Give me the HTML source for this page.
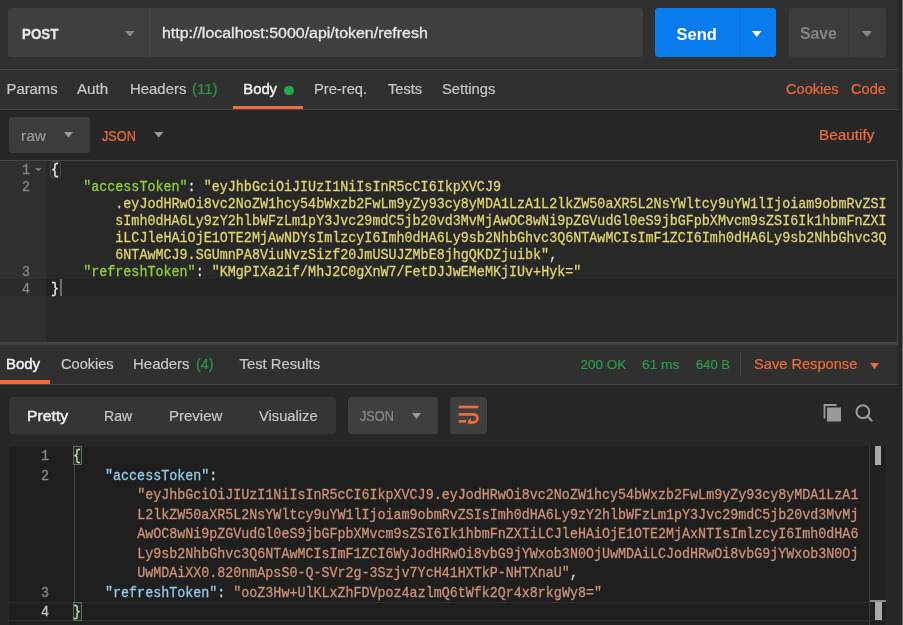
<!DOCTYPE html>
<html><head><meta charset="utf-8"><style>
html,body{margin:0;padding:0;}
body{width:903px;height:625px;overflow:hidden;position:relative;background:#272727;font-family:"Liberation Sans",sans-serif;}
#w{position:absolute;left:0;top:0;width:903px;height:625px;filter:blur(0.45px);}
.a{position:absolute;}
.t{position:absolute;white-space:pre;line-height:1;transform-origin:0 0;}
.c{position:absolute;white-space:pre;font-family:"Liberation Mono",monospace;font-size:14.2px;line-height:17px;-webkit-text-stroke:0.3px currentColor;transform:scaleX(0.9413);transform-origin:0 0;}
.c span{-webkit-text-stroke:0.3px currentColor;}
.r{line-height:19.5px;}
.q{transform:scaleX(0.9437);}
</style></head><body><div id="w">
<div class="a" style="left:0px;top:0px;width:903px;height:625px;background:#272727;"></div>
<div class="a" style="left:0px;top:0px;width:898px;height:109px;background:#303030;"></div>
<div class="a" style="left:901.7px;top:0px;width:1.3px;height:625px;background:#6a6a6a;"></div>
<div class="a" style="left:8px;top:8px;width:635px;height:49px;background:#3f3f3f;border-radius:3px;"></div>
<div class="a" style="left:148.5px;top:8px;width:1px;height:49px;background:#464646;"></div>
<div class="t" style="left:22.30px;top:26.06px;font-size:15.4px;color:#e8e8e8;font-weight:700;transform:scaleX(0.8674);-webkit-text-stroke:0.3px #e8e8e8;">POST</div>
<svg class="a" style="left:125.4px;top:30.5px" width="9.6" height="5.8" viewBox="0 0 9.6 5.8"><path d="M0 0H9.6L4.80 5.8Z" fill="#8a8a8a"/></svg>
<div class="t" style="left:161.60px;top:24.68px;font-size:15.5px;color:#e8e8e8;font-weight:400;transform:scaleX(1.0281);-webkit-text-stroke:0.3px #e8e8e8;">http://localhost:5000/api/token/refresh</div>
<div class="a" style="left:655px;top:8px;width:121px;height:49px;background:#097bed;border-radius:3px;"></div>
<div class="a" style="left:739px;top:8px;width:1px;height:49px;background:#0a6ed4;"></div>
<div class="t" style="left:676.60px;top:25.83px;font-size:16.5px;color:#ffffff;font-weight:700;">Send</div>
<svg class="a" style="left:752.3px;top:30.5px" width="9.5" height="6.0" viewBox="0 0 9.5 6.0"><path d="M0 0H9.5L4.75 6.0Z" fill="#ffffff"/></svg>
<div class="a" style="left:789px;top:8px;width:97px;height:49px;background:#3c3c3c;border-radius:3px;"></div>
<div class="a" style="left:848px;top:8px;width:1px;height:49px;background:#343434;"></div>
<div class="t" style="left:799.80px;top:26.26px;font-size:16px;color:#858585;font-weight:700;transform:scaleX(0.9877);">Save</div>
<svg class="a" style="left:861.7px;top:30.5px" width="10.1" height="6.0" viewBox="0 0 10.1 6.0"><path d="M0 0H10.1L5.05 6.0Z" fill="#8a8a8a"/></svg>
<div class="a" style="left:0px;top:69px;width:898px;height:1.2px;background:#474747;"></div>
<div class="a" style="left:0px;top:109px;width:898px;height:1.2px;background:#474747;"></div>
<div class="t" style="left:6.60px;top:82.47px;font-size:14.8px;color:#c8c8c8;font-weight:400;-webkit-text-stroke:0.2px #c8c8c8;">Params</div>
<div class="t" style="left:77.40px;top:82.47px;font-size:14.8px;color:#c8c8c8;font-weight:400;transform:scaleX(1.0258);-webkit-text-stroke:0.2px #c8c8c8;">Auth</div>
<div class="t" style="left:129.60px;top:82.47px;font-size:14.8px;color:#c8c8c8;font-weight:400;transform:scaleX(1.0082);-webkit-text-stroke:0.2px #c8c8c8;">Headers</div>
<div class="t" style="left:192.00px;top:82.47px;font-size:14.8px;color:#24994a;font-weight:400;transform:scaleX(1.0145);-webkit-text-stroke:0.2px #24994a;">(11)</div>
<div class="t" style="left:243.30px;top:82.47px;font-size:14.8px;color:#f2f2f2;font-weight:400;-webkit-text-stroke:0.45px #f2f2f2;">Body</div>
<div class="a" style="left:284px;top:85.5px;width:9.5px;height:9.5px;border-radius:50%;background:#26a74b"></div>
<div class="t" style="left:313.70px;top:82.47px;font-size:14.8px;color:#c8c8c8;font-weight:400;transform:scaleX(0.9925);-webkit-text-stroke:0.2px #c8c8c8;">Pre-req.</div>
<div class="t" style="left:387.80px;top:82.47px;font-size:14.8px;color:#c8c8c8;font-weight:400;transform:scaleX(0.9896);-webkit-text-stroke:0.2px #c8c8c8;">Tests</div>
<div class="t" style="left:442.00px;top:82.47px;font-size:14.8px;color:#c8c8c8;font-weight:400;-webkit-text-stroke:0.2px #c8c8c8;">Settings</div>
<div class="t" style="left:785.70px;top:82.47px;font-size:14.8px;color:#f26b3a;font-weight:400;transform:scaleX(0.9850);-webkit-text-stroke:0.2px #f26b3a;">Cookies</div>
<div class="t" style="left:851.00px;top:82.47px;font-size:14.8px;color:#f26b3a;font-weight:400;transform:scaleX(0.9867);-webkit-text-stroke:0.2px #f26b3a;">Code</div>
<div class="a" style="left:233px;top:106px;width:70px;height:3px;background:#f26b3a;"></div>
<div class="a" style="left:9px;top:117px;width:81px;height:36px;background:#3c3c3c;border-radius:3px;"></div>
<div class="t" style="left:20.90px;top:128.77px;font-size:14.8px;color:#9a9a9a;font-weight:400;transform:scaleX(1.0418);-webkit-text-stroke:0.2px #9a9a9a;">raw</div>
<svg class="a" style="left:63.8px;top:132.3px" width="9.0" height="5.6" viewBox="0 0 9.0 5.6"><path d="M0 0H9.0L4.50 5.6Z" fill="#9a9a9a"/></svg>
<div class="t" style="left:101.70px;top:129.27px;font-size:14.8px;color:#f26b3a;font-weight:400;transform:scaleX(0.8570);-webkit-text-stroke:0.2px #f26b3a;">JSON</div>
<svg class="a" style="left:153.5px;top:132.3px" width="9.5" height="5.6" viewBox="0 0 9.5 5.6"><path d="M0 0H9.5L4.75 5.6Z" fill="#9a9a9a"/></svg>
<div class="t" style="left:818.60px;top:127.97px;font-size:14.8px;color:#f26b3a;font-weight:400;transform:scaleX(1.0355);-webkit-text-stroke:0.2px #f26b3a;">Beautify</div>
<div class="a" style="left:0px;top:159.8px;width:898px;height:185.2px;background:#474747;border-top-right-radius:3px;"></div>
<div class="a" style="left:0px;top:160.8px;width:46px;height:181.2px;background:#2f2f2f;"></div>
<div class="a" style="left:46px;top:160.8px;width:851px;height:181.2px;background:#282828;border-top-right-radius:2px;"></div>
<div class="a" style="left:0px;top:279px;width:46px;height:17px;background:#2a2a2a;"></div>
<div class="a" style="left:46px;top:279px;width:851px;height:17px;background:#222222;"></div>
<div class="a" style="left:0px;top:342px;width:898px;height:3px;background:#434343;"></div>
<div class="a" style="left:0px;top:345px;width:898px;height:40px;background:#303030;"></div>
<div class="a" style="left:0px;top:384px;width:898px;height:1.2px;background:#484848;"></div>
<div class="a" style="left:0px;top:380px;width:50px;height:4px;background:#f26b3a;"></div>
<div class="t" style="left:6.40px;top:357.07px;font-size:14.8px;color:#f2f2f2;font-weight:400;transform:scaleX(1.0106);-webkit-text-stroke:0.45px #f2f2f2;">Body</div>
<div class="t" style="left:60.50px;top:357.07px;font-size:14.8px;color:#c8c8c8;font-weight:400;transform:scaleX(0.9850);-webkit-text-stroke:0.2px #c8c8c8;">Cookies</div>
<div class="t" style="left:133.20px;top:357.07px;font-size:14.8px;color:#c8c8c8;font-weight:400;transform:scaleX(1.0117);-webkit-text-stroke:0.2px #c8c8c8;">Headers</div>
<div class="t" style="left:196.20px;top:357.07px;font-size:14.8px;color:#24994a;font-weight:400;transform:scaleX(0.9747);-webkit-text-stroke:0.2px #24994a;">(4)</div>
<div class="t" style="left:239.50px;top:357.07px;font-size:14.8px;color:#c8c8c8;font-weight:400;-webkit-text-stroke:0.2px #c8c8c8;">Test Results</div>
<div class="t" style="left:580.40px;top:357.87px;font-size:13.5px;color:#2a9d4a;font-weight:400;-webkit-text-stroke:0.2px #2a9d4a;">200 OK</div>
<div class="t" style="left:641.80px;top:357.87px;font-size:13.5px;color:#2a9d4a;font-weight:400;transform:scaleX(1.0166);-webkit-text-stroke:0.2px #2a9d4a;">61 ms</div>
<div class="t" style="left:695.60px;top:357.87px;font-size:13.5px;color:#2a9d4a;font-weight:400;transform:scaleX(0.9603);-webkit-text-stroke:0.2px #2a9d4a;">640 B</div>
<div class="a" style="left:740px;top:352px;width:1px;height:24px;background:#444;"></div>
<div class="t" style="left:753.70px;top:356.77px;font-size:14.8px;color:#f26b3a;font-weight:400;transform:scaleX(0.9886);-webkit-text-stroke:0.2px #f26b3a;">Save Response</div>
<svg class="a" style="left:869.5px;top:363.0px" width="9.0" height="6.0" viewBox="0 0 9.0 6.0"><path d="M0 0H9.0L4.50 6.0Z" fill="#f26b3a"/></svg>
<div class="a" style="left:9px;top:397px;width:327px;height:37px;background:#353535;border-radius:4px;"></div>
<div class="t" style="left:26.60px;top:409.47px;font-size:14.8px;color:#f0f0f0;font-weight:400;transform:scaleX(1.0666);-webkit-text-stroke:0.45px #f0f0f0;">Pretty</div>
<div class="t" style="left:104.20px;top:409.47px;font-size:14.8px;color:#c8c8c8;font-weight:400;transform:scaleX(0.9503);-webkit-text-stroke:0.2px #c8c8c8;">Raw</div>
<div class="t" style="left:169.30px;top:409.47px;font-size:14.8px;color:#c8c8c8;font-weight:400;transform:scaleX(1.0135);-webkit-text-stroke:0.2px #c8c8c8;">Preview</div>
<div class="t" style="left:259.00px;top:409.47px;font-size:14.8px;color:#c8c8c8;font-weight:400;transform:scaleX(0.9936);-webkit-text-stroke:0.2px #c8c8c8;">Visualize</div>
<div class="a" style="left:348px;top:397px;width:90px;height:37px;background:#3f3f3f;border-radius:4px;"></div>
<div class="t" style="left:360.00px;top:409.47px;font-size:14.8px;color:#8a8a8a;font-weight:400;transform:scaleX(0.8595);-webkit-text-stroke:0.2px #8a8a8a;">JSON</div>
<svg class="a" style="left:411.8px;top:413.3px" width="9.0" height="6.0" viewBox="0 0 9.0 6.0"><path d="M0 0H9.0L4.50 6.0Z" fill="#9a9a9a"/></svg>
<div class="a" style="left:450px;top:397px;width:37px;height:37px;background:#3f3f3f;border-radius:4px;"></div>
<svg class="a" style="left:450px;top:397px" width="37" height="36" viewBox="0 0 37 36"><g stroke="#f26b3a" stroke-width="2.7" fill="none"><path d="M8.7 10H28.3"/><path d="M8.7 17.3H23.5a4 4 0 0 1 0 8H18"/><path d="M8.7 24.3H16"/></g><path d="M17.5 24.3L21 20.9V27.7Z" fill="#f26b3a"/></svg>
<svg class="a" style="left:820px;top:400px" width="26" height="26" viewBox="0 0 26 26"><path d="M4.5 18.5V5H16.5" stroke="#9a9a9a" stroke-width="1.8" fill="none"/><rect x="7" y="7.5" width="14" height="14" fill="#9a9a9a"/></svg>
<svg class="a" style="left:850px;top:400px" width="26" height="26" viewBox="0 0 26 26"><circle cx="12.9" cy="11.7" r="6.4" stroke="#9a9a9a" stroke-width="2" fill="none"/><path d="M17.3 16.3L21.5 20.6" stroke="#9a9a9a" stroke-width="2.2" stroke-linecap="round"/></svg>
<div class="a" style="left:9px;top:446px;width:877px;height:179px;background:#1f1f1f;"></div>
<div class="a" style="left:869px;top:446px;width:1px;height:179px;background:#3a3a3a;"></div>
<div class="a" style="left:870px;top:446px;width:16px;height:179px;background:#202020;"></div>
<div class="a" style="left:875px;top:446px;width:6px;height:19px;background:#a8a8a8;"></div>
<div class="a" style="left:870px;top:600px;width:16px;height:2.4px;background:#8a8a8a;"></div>
<div class="a" style="left:875px;top:602px;width:6.5px;height:19px;background:#a8a8a8;"></div>
<div class="c" style="left:22px;top:162.00px;color:#858585">1</div>
<div class="c" style="left:22px;top:179.00px;color:#858585">2</div>
<div class="c" style="left:22px;top:264.00px;color:#858585">3</div>
<div class="c" style="left:22px;top:281.00px;color:#858585">4</div>
<svg class="a" style="left:35.0px;top:167.6px" width="6.6" height="3.6" viewBox="0 0 6.6 3.6"><path d="M0 0H6.6L3.30 3.6Z" fill="#7a7a7a"/></svg>
<div class="a" style="left:50.2px;top:160.6px;width:10.6px;height:17.7px;background:transparent;border:1px solid #4a4a3a;border-radius:3px;box-sizing:border-box;"></div>
<div class="a" style="left:60px;top:279px;width:1.6px;height:17px;background:#707070;"></div>
<div class="c q" style="left:50.7px;top:161.50px;"><span style="color:#f0f0f0">{</span></div>
<div class="c q" style="left:50.7px;top:178.50px;">    <span style="color:#96cf3c">"accessToken"</span><span style="color:#dddddd">: </span><span style="color:#e0d472">"eyJhbGciOiJIUzI1NiIsInR5cCI6IkpXVCJ9</span></div>
<div class="c q" style="left:50.7px;top:195.50px;">        <span style="color:#e0d472">.eyJodHRwOi8vc2NoZW1hcy54bWxzb2FwLm9yZy93cy8yMDA1LzA1L2lkZW50aXR5L2NsYWltcy9uYW1lIjoiam9obmRvZSI</span></div>
<div class="c q" style="left:50.7px;top:212.50px;">        <span style="color:#e0d472">sImh0dHA6Ly9zY2hlbWFzLm1pY3Jvc29mdC5jb20vd3MvMjAwOC8wNi9pZGVudGl0eS9jbGFpbXMvcm9sZSI6Ik1hbmFnZXI</span></div>
<div class="c q" style="left:50.7px;top:229.50px;">        <span style="color:#e0d472">iLCJleHAiOjE1OTE2MjAwNDYsImlzcyI6Imh0dHA6Ly9sb2NhbGhvc3Q6NTAwMCIsImF1ZCI6Imh0dHA6Ly9sb2NhbGhvc3Q</span></div>
<div class="c q" style="left:50.7px;top:246.50px;">        <span style="color:#e0d472">6NTAwMCJ9.SGUmnPA8ViuNvzSizf20JmUSUJZMbE8jhgQKDZjuibk"</span><span style="color:#dddddd">,</span></div>
<div class="c q" style="left:50.7px;top:263.50px;">    <span style="color:#96cf3c">"refreshToken"</span><span style="color:#dddddd">: </span><span style="color:#e0d472">"KMgPIXa2if/MhJ2C0gXnW7/FetDJJwEMeMKjIUv+Hyk="</span></div>
<div class="c q" style="left:50.7px;top:280.50px;"><span style="color:#f0f0f0">}</span></div>
<div class="a" style="left:9px;top:602px;width:860px;height:1px;background:#2e2e2e;"></div>
<div class="a" style="left:9px;top:619.5px;width:877px;height:1px;background:#2e2e2e;"></div>
<div class="a" style="left:73.5px;top:446px;width:1px;height:156px;background:#444;"></div>
<div class="c" style="left:40.5px;top:447.00px;color:#858585;line-height:19.5px">1</div>
<div class="c" style="left:40.5px;top:466.50px;color:#858585;line-height:19.5px">2</div>
<div class="c" style="left:40.5px;top:583.50px;color:#858585;line-height:19.5px">3</div>
<div class="c" style="left:40.5px;top:603.00px;color:#c6c6c6;line-height:19.5px">4</div>
<div class="a" style="left:73px;top:446px;width:9px;height:19px;background:#1d3020;border:1px solid #6a6a6a;box-sizing:border-box;"></div>
<div class="a" style="left:73px;top:601.5px;width:9px;height:19px;background:#1d3020;border:1px solid #6a6a6a;box-sizing:border-box;"></div>
<div class="c r" style="left:73.0px;top:447.17px;"><span style="color:#d4d4d4">{</span></div>
<div class="c r" style="left:73.0px;top:466.67px;">    <span style="color:#92cbea">"accessToken"</span><span style="color:#d4d4d4">:</span></div>
<div class="c r" style="left:73.0px;top:486.17px;">        <span style="color:#ce9178">"eyJhbGciOiJIUzI1NiIsInR5cCI6IkpXVCJ9.eyJodHRwOi8vc2NoZW1hcy54bWxzb2FwLm9yZy93cy8yMDA1LzA1</span></div>
<div class="c r" style="left:73.0px;top:505.67px;">        <span style="color:#ce9178">L2lkZW50aXR5L2NsYWltcy9uYW1lIjoiam9obmRvZSIsImh0dHA6Ly9zY2hlbWFzLm1pY3Jvc29mdC5jb20vd3MvMj</span></div>
<div class="c r" style="left:73.0px;top:525.17px;">        <span style="color:#ce9178">AwOC8wNi9pZGVudGl0eS9jbGFpbXMvcm9sZSI6Ik1hbmFnZXIiLCJleHAiOjE1OTE2MjAxNTIsImlzcyI6Imh0dHA6</span></div>
<div class="c r" style="left:73.0px;top:544.67px;">        <span style="color:#ce9178">Ly9sb2NhbGhvc3Q6NTAwMCIsImF1ZCI6WyJodHRwOi8vbG9jYWxob3N0OjUwMDAiLCJodHRwOi8vbG9jYWxob3N0Oj</span></div>
<div class="c r" style="left:73.0px;top:564.17px;">        <span style="color:#ce9178">UwMDAiXX0.820nmApsS0-Q-SVr2g-3Szjv7YcH41HXTkP-NHTXnaU"</span><span style="color:#d4d4d4">,</span></div>
<div class="c r" style="left:73.0px;top:583.67px;">    <span style="color:#92cbea">"refreshToken"</span><span style="color:#d4d4d4">: </span><span style="color:#ce9178">"ooZ3Hw+UlKLxZhFDVpoz4azlmQ6tWfk2Qr4x8rkgWy8="</span></div>
<div class="c r" style="left:73.0px;top:603.17px;"><span style="color:#d4d4d4">}</span></div>
</div></body></html>
